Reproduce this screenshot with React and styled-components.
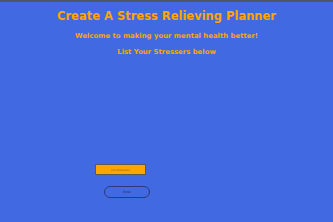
import React from 'react'
import styled, { createGlobalStyle } from 'styled-components'

const GlobalStyle = createGlobalStyle`
  html, body {
    margin: 0;
    padding: 0;
    background: #4169e1;
  }
  body {
    font-family: 'DejaVu Sans', sans-serif;
  }
`

const Page = styled.div`
  box-sizing: border-box;
  min-height: 222px;
  border-top: 2px solid #4f5666;
  background: #4169e1;
  display: flex;
  flex-direction: column;
`

const Header = styled.header`
  display: flex;
  flex-direction: column;
  align-items: center;
  color: #ffa500;
  font-weight: bold;
`

const Title = styled.h1`
  margin: 7px 0 0;
  font-size: 11.5px;
  line-height: 14px;
`

const Subtitle = styled.h3`
  margin: ${({ top }) => top}px 0 0;
  font-size: 6.9px;
  line-height: 9px;
`

const Form = styled.form`
  margin-top: 107px;
  padding-left: 95px;
  display: flex;
  flex-direction: column;
  align-items: flex-start;
  gap: 11px;
`

const Input = styled.input`
  box-sizing: border-box;
  width: 51px;
  height: 11px;
  margin: 0;
  padding: 0 0 0 15px;
  background: #ffa500;
  border: 1px solid #5a5a5a;
  font-family: 'DejaVu Sans', sans-serif;
  font-size: 3px;
  outline: none;

  &::placeholder {
    color: #8a6a2a;
  }
`

const Button = styled.button`
  box-sizing: border-box;
  margin-left: 9px;
  width: 46px;
  height: 12px;
  padding: 0;
  background: transparent;
  border: 1px solid #2a3a7a;
  border-radius: 6px;
  color: #1f2a55;
  font-family: 'DejaVu Sans', sans-serif;
  font-size: 3px;
`

export default function App() {
  return (
    <>
      <GlobalStyle />
      <Page>
        <Header>
          <Title>Create A Stress Relieving Planner</Title>
          <Subtitle top={9}>Welcome to making your mental health better!</Subtitle>
          <Subtitle top={7}>List Your Stressers below</Subtitle>
        </Header>
        <Form onSubmit={e => e.preventDefault()}>
          <Input placeholder="list stressors" />
          <Button type="submit">Enter</Button>
        </Form>
      </Page>
    </>
  )
}
